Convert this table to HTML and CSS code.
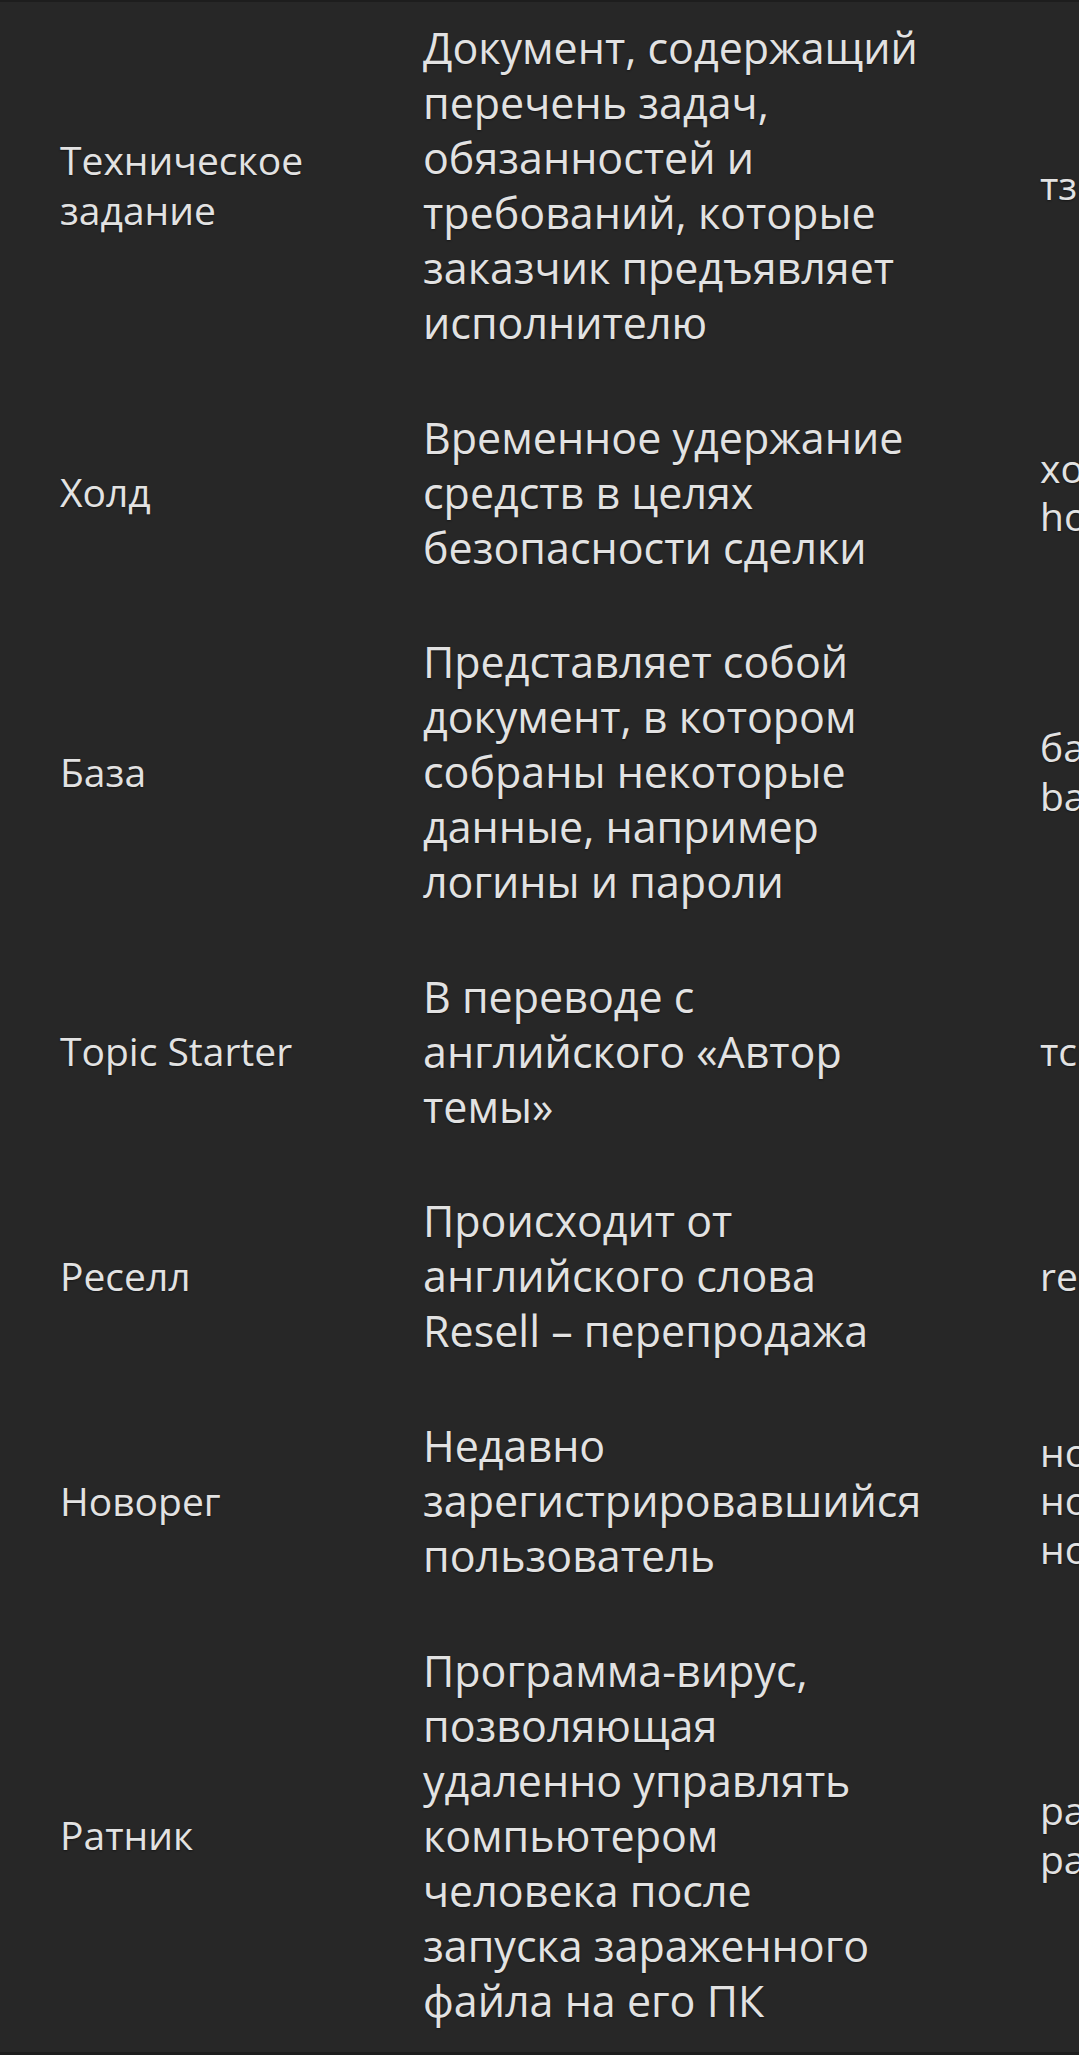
FILE: index.html
```html
<!DOCTYPE html>
<html lang="ru">
<head>
<meta charset="utf-8">
<title>Словарь</title>
<link rel="stylesheet" href="styles.css">
</head>
<body>
<table class="glossary">
  <colgroup>
    <col class="col-term">
    <col class="col-desc">
    <col class="col-alias">
  </colgroup>
  <tbody>
    <tr>
      <td class="term">Техническое задание</td>
      <td class="desc">Документ, содержащий перечень задач, обязанностей и требований, которые заказчик предъявляет исполнителю</td>
      <td class="alias">тз</td>
    </tr>
    <tr>
      <td class="term">Холд</td>
      <td class="desc">Временное удержание средств в целях безопасности сделки</td>
      <td class="alias">холд, hold</td>
    </tr>
    <tr>
      <td class="term">База</td>
      <td class="desc">Представляет собой документ, в котором собраны некоторые данные, например логины и пароли</td>
      <td class="alias">база, baza</td>
    </tr>
    <tr>
      <td class="term">Topic Starter</td>
      <td class="desc">В переводе с английского «Автор темы»</td>
      <td class="alias">тс</td>
    </tr>
    <tr>
      <td class="term">Реселл</td>
      <td class="desc">Происходит от английского слова Resell – перепродажа</td>
      <td class="alias">resell</td>
    </tr>
    <tr>
      <td class="term">Новорег</td>
      <td class="desc">Недавно зарегистрировавшийся пользователь</td>
      <td class="alias">нов, новорег, новичок</td>
    </tr>
    <tr>
      <td class="term">Ратник</td>
      <td class="desc">Программа-вирус, позволяющая удаленно управлять компьютером человека после запуска зараженного файла на его ПК</td>
      <td class="alias">рат, ратник</td>
    </tr>
  </tbody>
</table>
</body>
</html>
```

FILE: styles.css
```css
html, body {
  margin: 0;
  padding: 0;
  overflow: hidden;
  background: #272727;
}

body {
  font-family: "Open Sans", "Noto Sans", "DejaVu Sans", sans-serif;
  color: #e2e2e2;
}

.glossary {
  border-collapse: collapse;
  table-layout: fixed;
  width: 1260px;
  border-top: 2px solid #1d1d1d;
  border-bottom: 3px solid #1d1d1d;
}

.col-term { width: 423px; }
.col-desc { width: 617px; }
.col-alias { width: 220px; }

.glossary td {
  vertical-align: middle;
  padding: 29.8px 0;
  text-shadow: 0 1px 2px rgba(0, 0, 0, 0.45);
}

.glossary tr:first-child td { padding-top: 18px; }
.glossary tr:last-child td { padding-bottom: 24px; }

.term {
  font-size: 39px;
  line-height: 49.8px;
  padding-left: 60px !important;
  padding-right: 20px !important;
}

.desc {
  font-size: 43px;
  line-height: 55px;
  padding-right: 119px !important;
}

.alias {
  font-size: 39px;
  line-height: 48.6px;
  padding-right: 40px !important;
}
```
